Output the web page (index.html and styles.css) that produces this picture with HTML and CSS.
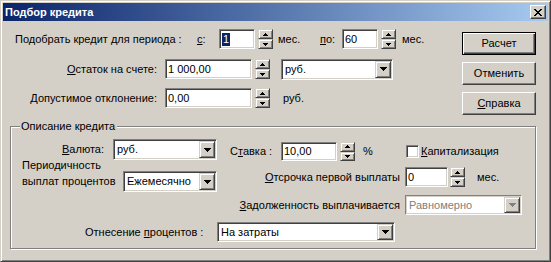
FILE: index.html
```html
<!DOCTYPE html>
<html lang="ru">
<head>
<meta charset="utf-8">
<title>Подбор кредита</title>
<link rel="stylesheet" href="styles.css">
</head>
<body>
<div class="window">
  <div class="titlebar">
    <span class="title">Подбор кредита</span>
    <span class="close"><svg width="8" height="7" viewBox="0 0 8 7" shape-rendering="crispEdges"><path d="M0 0h2v1h1v1h2V1h1V0h2v1H7v1H6v1H5v1h1v1h1v1h1v1H6V6H5V5H3v1H2v1H0V6h1V5h1V4h1V3H2V2H1V1H0z"/></svg></span>
  </div>
  <div class="client">
    <div class="top">
      <div class="fields">
        <div class="row r1">
          <span class="lbl l-period">Подобрать кредит для периода :</span>
          <span class="lbl l-from"><u>с</u>:</span>
          <span class="edit e-short"><span class="sel">1</span></span>
          <span class="spin"><span class="sb"><svg width="5" height="3" viewBox="0 0 5 3" shape-rendering="crispEdges"><path d="M2 0h1v1h1v1h1v1H0V2h1V1h1z"/></svg></span><span class="sb"><svg width="5" height="3" viewBox="0 0 5 3" shape-rendering="crispEdges"><path d="M0 0h5v1H4v1H3v1H2V2H1V1H0z"/></svg></span></span>
          <span class="lbl l-mes1">мес.</span>
          <span class="lbl l-to"><u>п</u>о:</span>
          <span class="edit e-short">60</span>
          <span class="spin"><span class="sb"><svg width="5" height="3" viewBox="0 0 5 3" shape-rendering="crispEdges"><path d="M2 0h1v1h1v1h1v1H0V2h1V1h1z"/></svg></span><span class="sb"><svg width="5" height="3" viewBox="0 0 5 3" shape-rendering="crispEdges"><path d="M0 0h5v1H4v1H3v1H2V2H1V1H0z"/></svg></span></span>
          <span class="lbl l-mes2">мес.</span>
        </div>
        <div class="row r2">
          <span class="lbl l-right"><u>О</u>статок на счете:</span>
          <span class="edit e-money">1 000,00</span>
          <span class="spin"><span class="sb"><svg width="5" height="3" viewBox="0 0 5 3" shape-rendering="crispEdges"><path d="M2 0h1v1h1v1h1v1H0V2h1V1h1z"/></svg></span><span class="sb"><svg width="5" height="3" viewBox="0 0 5 3" shape-rendering="crispEdges"><path d="M0 0h5v1H4v1H3v1H2V2H1V1H0z"/></svg></span></span>
          <span class="combo c-cur"><span class="ctext">руб.</span><span class="arrow"><svg width="7" height="4" viewBox="0 0 7 4" shape-rendering="crispEdges"><path d="M0 0h7v1H6v1H5v1H4v1H3V3H2V2H1V1H0z"/></svg></span></span>
        </div>
        <div class="row r3">
          <span class="lbl l-right">Допустимое отклонение:</span>
          <span class="edit e-money">0,00</span>
          <span class="spin"><span class="sb"><svg width="5" height="3" viewBox="0 0 5 3" shape-rendering="crispEdges"><path d="M2 0h1v1h1v1h1v1H0V2h1V1h1z"/></svg></span><span class="sb"><svg width="5" height="3" viewBox="0 0 5 3" shape-rendering="crispEdges"><path d="M0 0h5v1H4v1H3v1H2V2H1V1H0z"/></svg></span></span>
          <span class="lbl l-rub">руб.</span>
        </div>
      </div>
      <div class="buttons">
        <span class="btn def">Расчет</span>
        <span class="btn">Отменить</span>
        <span class="btn"><span><u>С</u>правка</span></span>
      </div>
    </div>
    <fieldset class="group">
      <legend>Описание кредита</legend>
      <div class="gcols">
        <div class="gleft">
          <div class="grow ga">
            <span class="lbl l-val"><u>В</u>алюта:</span>
            <span class="combo c-val"><span class="ctext">руб.</span><span class="arrow"><svg width="7" height="4" viewBox="0 0 7 4" shape-rendering="crispEdges"><path d="M0 0h7v1H6v1H5v1H4v1H3V3H2V2H1V1H0z"/></svg></span></span>
          </div>
          <div class="grow gb">
            <span class="lbl l-per">Периодичность<br>выплат процентов</span>
            <span class="combo c-per"><span class="ctext">Ежемесячно</span><span class="arrow"><svg width="7" height="4" viewBox="0 0 7 4" shape-rendering="crispEdges"><path d="M0 0h7v1H6v1H5v1H4v1H3V3H2V2H1V1H0z"/></svg></span></span>
          </div>
        </div>
        <div class="gright">
          <div class="grow gr1">
            <span class="lbl l-rate">С<u>т</u>авка :</span>
            <span class="edit e-rate">10,00</span>
            <span class="spin"><span class="sb"><svg width="5" height="3" viewBox="0 0 5 3" shape-rendering="crispEdges"><path d="M2 0h1v1h1v1h1v1H0V2h1V1h1z"/></svg></span><span class="sb"><svg width="5" height="3" viewBox="0 0 5 3" shape-rendering="crispEdges"><path d="M0 0h5v1H4v1H3v1H2V2H1V1H0z"/></svg></span></span>
            <span class="lbl l-pct">%</span>
            <span class="chk"></span>
            <span class="lbl l-cap"><u>К</u>апитализация</span>
          </div>
          <div class="grow gr2">
            <span class="lbl l-rr"><u>О</u>тсрочка первой выплаты</span>
            <span class="edit e-delay">0</span>
            <span class="spin"><span class="sb"><svg width="5" height="3" viewBox="0 0 5 3" shape-rendering="crispEdges"><path d="M2 0h1v1h1v1h1v1H0V2h1V1h1z"/></svg></span><span class="sb"><svg width="5" height="3" viewBox="0 0 5 3" shape-rendering="crispEdges"><path d="M0 0h5v1H4v1H3v1H2V2H1V1H0z"/></svg></span></span>
            <span class="lbl l-mes3">мес.</span>
          </div>
          <div class="grow gr3">
            <span class="lbl l-rr"><u>З</u>адолженность выплачивается</span>
            <span class="combo c-debt disabled"><span class="ctext">Равномерно</span><span class="arrow"><svg width="7" height="4" viewBox="0 0 7 4" shape-rendering="crispEdges"><path d="M0 0h7v1H6v1H5v1H4v1H3V3H2V2H1V1H0z"/></svg></span></span>
          </div>
        </div>
      </div>
      <div class="grow gd">
        <span class="lbl l-alloc">Отнесение <u>п</u>роцентов :</span>
        <span class="combo c-alloc"><span class="ctext">На затраты</span><span class="arrow"><svg width="7" height="4" viewBox="0 0 7 4" shape-rendering="crispEdges"><path d="M0 0h7v1H6v1H5v1H4v1H3V3H2V2H1V1H0z"/></svg></span></span>
      </div>
    </fieldset>
  </div>
</div>
</body>
</html>
```
FILE: styles.css
```css
* { box-sizing: border-box; }
html, body { margin: 0; padding: 0; }
body {
  font: 11px/13px "Liberation Sans", Arial, sans-serif;
  color: #000;
  background: #d4d0c8;
}
u { text-decoration: underline; text-underline-offset: 1px; }

.window {
  width: 551px;
  height: 262px;
  background: #d4d0c8;
  border: 1px solid;
  border-color: #d4d0c8 #404040 #404040 #d4d0c8;
  box-shadow: inset 1px 1px #fff, inset -1px -1px #808080;
  padding: 2px;
  display: flex;
  flex-direction: column;
}

.titlebar {
  flex: none;
  height: 18px;
  background: linear-gradient(90deg, #0a246a, #a6caf0);
  display: flex;
  align-items: center;
  padding: 0 2px 0 2px;
  color: #fff;
  font-weight: bold;
}
.title { flex: 1; }
.close {
  width: 16px;
  height: 14px;
  background: #d4d0c8;
  border: 1px solid;
  border-color: #fff #404040 #404040 #fff;
  box-shadow: inset -1px -1px #808080;
  display: flex;
  align-items: center;
  justify-content: center;
}
.close svg { fill: #000; display: block; }

.client { flex: 1; display: flex; flex-direction: column; }

.top { display: flex; }
.fields { padding-top: 8px; }
.row { display: flex; align-items: center; height: 20px; }
.r2 { margin-top: 10px; }
.r3 { margin-top: 9px; }

.lbl { white-space: nowrap; }
.l-period { margin-left: 12px; width: 182px; }
.l-from { width: 22px; }
.l-mes1 { margin-left: 5px; width: 42px; }
.l-to { width: 22px; }
.l-mes2 { margin-left: 6px; }
.l-right { width: 154px; text-align: right; margin-right: 8px; }
.l-rub { margin-left: 13px; }

.edit {
  height: 20px;
  background: #fff;
  border: 1px solid;
  border-color: #808080 #fff #fff #808080;
  box-shadow: inset 1px 1px #404040, inset -1px -1px #d4d0c8;
  padding: 0 2px;
  display: flex;
  align-items: center;
  white-space: nowrap;
}
.e-short { width: 36px; }
.e-money { width: 87px; }
.sel { background: #0a246a; color: #fff; padding: 0 1px; }

.spin {
  width: 15px;
  height: 20px;
  margin-left: 3px;
  display: flex;
  flex-direction: column;
}
.sb {
  flex: 1;
  background: #d4d0c8;
  border: 1px solid;
  border-color: #d4d0c8 #404040 #404040 #d4d0c8;
  box-shadow: inset 1px 1px #fff, inset -1px -1px #808080;
  display: flex;
  align-items: center;
  justify-content: center;
}
.sb svg { display: block; fill: #000; }

.combo {
  height: 21px;
  background: #fff;
  border: 1px solid;
  border-color: #808080 #fff #fff #808080;
  box-shadow: inset 1px 1px #404040, inset -1px -1px #d4d0c8;
  padding: 1px;
  display: flex;
  white-space: nowrap;
}
.ctext { flex: 1; display: flex; align-items: center; padding-left: 2px; overflow: hidden; }
.arrow {
  width: 16px;
  background: #d4d0c8;
  border: 1px solid;
  border-color: #d4d0c8 #404040 #404040 #d4d0c8;
  box-shadow: inset 1px 1px #fff, inset -1px -1px #808080;
  display: flex;
  align-items: center;
  justify-content: center;
}
.arrow svg { display: block; fill: #000; }
.c-cur { margin-left: 11px; width: 112px; }
.disabled .ctext { color: #808080; }
.disabled .arrow svg { fill: #808080; }
.combo.disabled { box-shadow: inset 1px 1px #d4d0c8, inset -1px -1px #d4d0c8; border-color: #808080 #fff #fff #808080; }

.buttons {
  margin-left: auto;
  margin-right: 12px;
  margin-top: 11px;
  display: flex;
  flex-direction: column;
  gap: 7px;
}
.btn {
  width: 74px;
  height: 23px;
  border: 1px solid;
  border-color: #fff #404040 #404040 #fff;
  box-shadow: inset -1px -1px #808080;
  display: flex;
  align-items: center;
  justify-content: center;
}
.btn.def {
  border-color: #000;
  box-shadow: inset 1px 1px #fff, inset -1px -1px #404040, inset -2px -2px #808080;
}

.group {
  margin: 5px 12px 0 7px;
  height: 129px;
  border: 1px solid #808080;
  box-shadow: inset 1px 1px #fff, 1px 1px #fff;
  padding: 0;
  min-width: 0;
}
.group legend {
  margin-left: 9px;
  padding: 0 2px 0 1px;
  background: #d4d0c8;
  line-height: 13px;
}

.gcols { display: flex; }
.gleft { width: 214px; }
.grow { display: flex; align-items: center; }
.ga { margin-top: 6px; height: 21px; }
.l-val { width: 93px; text-align: right; margin-right: 9px; }
.c-val { width: 104px; }
.gb { align-items: flex-start; }
.l-per { margin-left: 11px; width: 101px; line-height: 16px; margin-top: -3px; }
.c-per { width: 94px; margin-top: 11px; }

.gright { flex: 1; }
.gr1 { margin-top: 9px; height: 19px; }
.l-rate { margin-left: 5px; width: 51px; }
.e-rate { width: 56px; height: 19px; }
.gr1 .spin { height: 19px; }
.l-pct { margin-left: 8px; width: 43px; }
.chk {
  width: 13px;
  height: 13px;
  background: #fff;
  border: 1px solid;
  border-color: #808080 #fff #fff #808080;
  box-shadow: inset 1px 1px #404040, inset -1px -1px #d4d0c8;
}
.l-cap { margin-left: 2px; }
.gr2 { margin-top: 6px; height: 20px; }
.l-rr { width: 175px; text-align: right; margin-right: 5px; }
.e-delay { width: 43px; }
.gr2 .spin { margin-left: 2px; }
.l-mes3 { margin-left: 12px; }
.gr3 { margin-top: 8px; height: 20px; }
.c-debt { width: 117px; height: 20px; }

.gd { margin-top: 7px; height: 20px; }
.l-alloc { margin-left: 74px; width: 132px; }
.c-alloc { width: 178px; height: 20px; }
```
